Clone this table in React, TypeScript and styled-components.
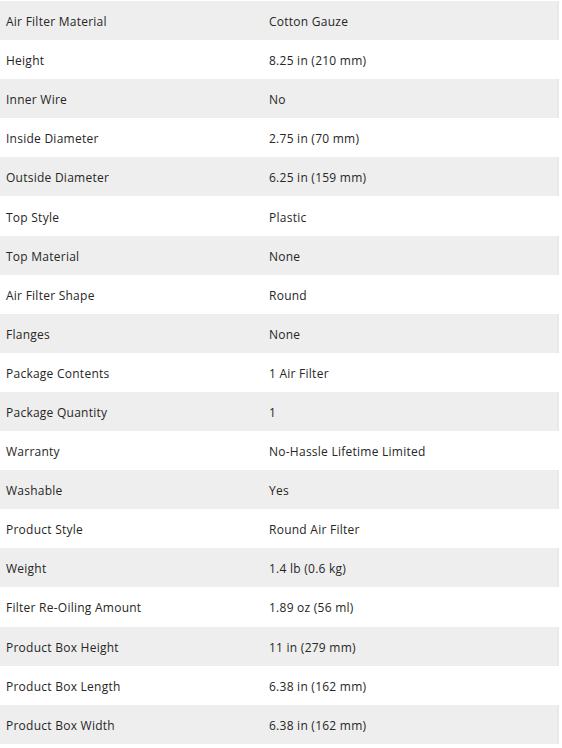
import styled, { createGlobalStyle } from "styled-components";

const GlobalStyle = createGlobalStyle`
  body {
    margin: 0;
    background: #ffffff;
    font-family: "Open Sans", "Liberation Sans", sans-serif;
  }
`;

const Table = styled.div`
  width: 559px;
  margin-top: 1px;
  display: flex;
  flex-direction: column;
`;

const Row = styled.div<{ $shaded: boolean }>`
  display: grid;
  grid-template-columns: 263px 1fr;
  align-items: center;
  height: 39.1px;
  background: ${(p) => (p.$shaded ? "#eeeeee" : "#ffffff")};
  border-right: 2px solid ${(p) => (p.$shaded ? "#e9e9e9" : "#ffffff")};
`;

const Cell = styled.span`
  padding: 2px 0 0 6px;
  font-size: 12px;
  letter-spacing: 0.25px;
  color: #262626;
  white-space: nowrap;
`;

const specs: [string, string][] = [
  ["Air Filter Material", "Cotton Gauze"],
  ["Height", "8.25 in (210 mm)"],
  ["Inner Wire", "No"],
  ["Inside Diameter", "2.75 in (70 mm)"],
  ["Outside Diameter", "6.25 in (159 mm)"],
  ["Top Style", "Plastic"],
  ["Top Material", "None"],
  ["Air Filter Shape", "Round"],
  ["Flanges", "None"],
  ["Package Contents", "1 Air Filter"],
  ["Package Quantity", "1"],
  ["Warranty", "No-Hassle Lifetime Limited"],
  ["Washable", "Yes"],
  ["Product Style", "Round Air Filter"],
  ["Weight", "1.4 lb (0.6 kg)"],
  ["Filter Re-Oiling Amount", "1.89 oz (56 ml)"],
  ["Product Box Height", "11 in (279 mm)"],
  ["Product Box Length", "6.38 in (162 mm)"],
  ["Product Box Width", "6.38 in (162 mm)"],
];

function App() {
  return (
    <>
      <GlobalStyle />
      <Table>
        {specs.map(([label, value], i) => (
          <Row key={label} $shaded={i % 2 === 0}>
            <Cell>{label}</Cell>
            <Cell>{value}</Cell>
          </Row>
        ))}
      </Table>
    </>
  );
}

export default App;
